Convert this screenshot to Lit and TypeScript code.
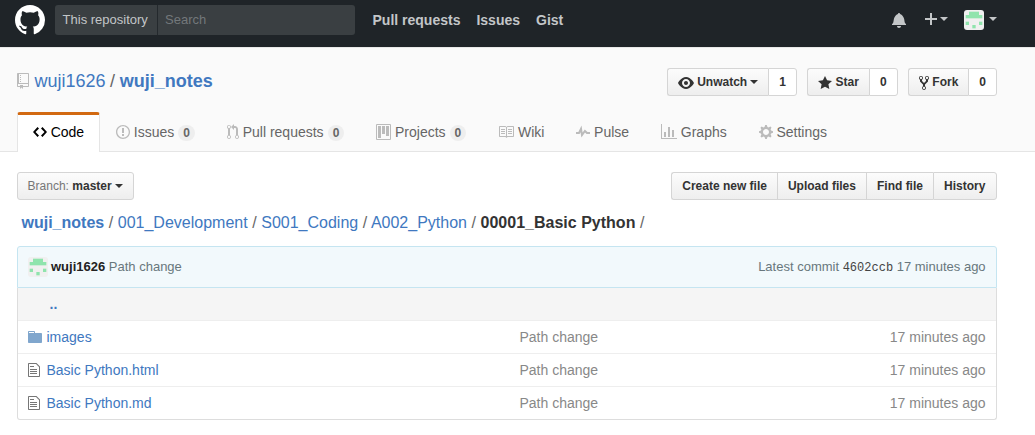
import { LitElement, html, css, svg, nothing } from "lit";
import { customElement, property } from "lit/decorators.js";

const ICONS: Record<string, [number, string]> = {
  github: [16, "M8 0C3.58 0 0 3.58 0 8c0 3.54 2.29 6.53 5.47 7.59.4.07.55-.17.55-.38 0-.19-.01-.82-.01-1.49-2.01.37-2.53-.49-2.69-.94-.09-.23-.48-.94-.82-1.13-.28-.15-.68-.52-.01-.53.63-.01 1.08.58 1.23.82.72 1.21 1.87.87 2.33.66.07-.52.28-.87.51-1.07-1.78-.2-3.64-.89-3.64-3.95 0-.87.31-1.59.82-2.15-.08-.2-.36-1.02.08-2.12 0 0 .67-.21 2.2.82.64-.18 1.32-.27 2-.27.68 0 1.36.09 2 .27 1.53-1.04 2.2-.82 2.2-.82.44 1.1.16 1.92.08 2.12.51.56.82 1.27.82 2.15 0 3.07-1.87 3.75-3.65 3.95.29.25.54.73.54 1.48 0 1.07-.01 1.93-.01 2.2 0 .21.15.46.55.38A8.013 8.013 0 0 0 16 8c0-4.42-3.58-8-8-8z"],
  repo: [12, "M4 9H3V8h1v1zm0-3H3v1h1V6zm0-2H3v1h1V4zm0-2H3v1h1V2zm8-1v12c0 .55-.45 1-1 1H6v2l-1.5-1.5L3 16v-2H1c-.55 0-1-.45-1-1V1c0-.55.45-1 1-1h10c.55 0 1 .45 1 1zm-1 10H1v2h2v-1h3v1h5v-2zm0-10H2v9h9V1z"],
  bell: [14, "M14 12v1H0v-1l.73-.58c.77-.77.81-2.55 1.19-4.42C2.69 3.23 6 2 6 2c0-.55.45-1 1-1s1 .45 1 1c0 0 3.39 1.23 4.16 5 .38 1.88.42 3.66 1.19 4.42l.66.58H14zm-7 4c1.11 0 2-.89 2-2H5c0 1.11.89 2 2 2z"],
  plus: [12, "M12 9H7v5H5V9H0V7h5V2h2v5h5z"],
  eye: [16, "M8.06 2C3 2 0 8 0 8s3 6 8.06 6C13 14 16 8 16 8s-3-6-7.94-6zM8 12c-2.2 0-4-1.78-4-4 0-2.2 1.8-4 4-4 2.22 0 4 1.8 4 4 0 2.22-1.78 4-4 4zm2-4c0 1.11-.89 2-2 2-1.11 0-2-.89-2-2 0-1.11.89-2 2-2 1.11 0 2 .89 2 2z"],
  star: [14, "M14 6l-4.9-.64L7 1 4.9 5.36 0 6l3.6 3.26L2.67 14 7 11.67 11.33 14l-.93-4.74z"],
  fork: [10, "M8 1a1.993 1.993 0 0 0-1 3.72V6L5 8 3 6V4.72A1.993 1.993 0 0 0 2 1a1.993 1.993 0 0 0-1 3.72V6.5l3 3v1.78A1.993 1.993 0 0 0 5 15a1.993 1.993 0 0 0 1-3.72V9.5l3-3V4.72A1.993 1.993 0 0 0 8 1zM2 4.2C1.34 4.2.8 3.65.8 3c0-.65.55-1.2 1.2-1.2.65 0 1.2.55 1.2 1.2 0 .65-.55 1.2-1.2 1.2zm3 10c-.66 0-1.2-.55-1.2-1.2 0-.65.55-1.2 1.2-1.2.65 0 1.2.55 1.2 1.2 0 .65-.55 1.2-1.2 1.2zm3-10c-.66 0-1.2-.55-1.2-1.2 0-.65.55-1.2 1.2-1.2.65 0 1.2.55 1.2 1.2 0 .65-.55 1.2-1.2 1.2z"],
  code: [14, "M9.5 3L8 4.5 11.5 8 8 11.5 9.5 13 14 8 9.5 3zm-5 0L0 8l4.5 5L6 11.5 2.5 8 6 4.5 4.5 3z"],
  issue: [14, "M7 2.3c3.14 0 5.7 2.56 5.7 5.7s-2.56 5.7-5.7 5.7A5.71 5.71 0 0 1 1.3 8c0-3.14 2.56-5.7 5.7-5.7zM7 1C3.14 1 0 4.14 0 8s3.14 7 7 7 7-3.14 7-7-3.14-7-7-7zm1 3H6v5h2V4zm0 6H6v2h2v-2z"],
  pull: [12, "M11 11.28V5c-.03-.78-.34-1.47-.94-2.06C9.46 2.35 8.78 2.03 8 2H7V0L4 3l3 3V4h1c.27.02.48.11.69.31.21.2.3.42.31.69v6.28A1.993 1.993 0 0 0 10 15a1.993 1.993 0 0 0 1-3.72zm-1 2.92c-.66 0-1.2-.55-1.2-1.2 0-.65.55-1.2 1.2-1.2.65 0 1.2.55 1.2 1.2 0 .65-.55 1.2-1.2 1.2zM4 3c0-1.11-.89-2-2-2a1.993 1.993 0 0 0-1 3.72v6.56A1.993 1.993 0 0 0 2 15a1.993 1.993 0 0 0 1-3.72V4.72c.59-.34 1-.98 1-1.72zm-.8 10c0 .66-.55 1.2-1.2 1.2-.65 0-1.2-.55-1.2-1.2 0-.65.55-1.2 1.2-1.2.65 0 1.2.55 1.2 1.2zM2 4.2C1.34 4.2.8 3.65.8 3c0-.65.55-1.2 1.2-1.2.65 0 1.2.55 1.2 1.2 0 .65-.55 1.2-1.2 1.2z"],
  project: [15, "M10 12h3V2h-3v10zm-4-2h3V2H6v8zm-4 4h3V2H2v12zm-1 1h13V1H1v14zM14 0H1a1 1 0 0 0-1 1v14a1 1 0 0 0 1 1h13a1 1 0 0 0 1-1V1a1 1 0 0 0-1-1z"],
  book: [16, "M3 5h4v1H3V5zm0 3h4V7H3v1zm0 2h4V9H3v1zm11-5h-4v1h4V5zm0 2h-4v1h4V7zm0 2h-4v1h4V9zm2-6v9c0 .55-.45 1-1 1H9.5l-1 1-1-1H2c-.55 0-1-.45-1-1V3c0-.55.45-1 1-1h5.5l1 1 1-1H15c.55 0 1 .45 1 1zm-8 .5L7.5 3H2v9h6V3.5zm7-.5H9.5l-.5.5V12h6V3z"],
  pulse: [14, "M11.5 8L8.8 5.4 6.6 8.5 5.5 1.6 2.38 8H0v2h3.6l.9-1.8.9 5.4L9 8.5l1.6 1.5H14V8z"],
  graph: [16, "M16 14v1H0V0h1v14h15zM5 13H3V8h2v5zm4 0H7V3h2v10zm4 0h-2V6h2v7z"],
  gear: [14, "M14 8.77v-1.6l-1.94-.64-.45-1.09.88-1.84-1.13-1.13-1.81.91-1.09-.45-.69-1.92h-1.6l-.63 1.94-1.11.45-1.84-.88-1.13 1.13.91 1.81-.45 1.09L0 7.23v1.59l1.94.64.45 1.09-.88 1.84 1.13 1.13 1.81-.91 1.09.45.69 1.92h1.59l.63-1.94 1.11-.45 1.84.88 1.13-1.13-.92-1.81.47-1.09L14 8.75v.02zM7 11c-1.66 0-3-1.34-3-3s1.34-3 3-3 3 1.34 3 3-1.34 3-3 3z"],
  folder: [14, "M13 4H7V3c0-.66-.31-1-1-1H1c-.55 0-1 .45-1 1v10c0 .55.45 1 1 1h12c.55 0 1-.45 1-1V5c0-.55-.45-1-1-1zM6 4H1V3h5v1z"],
  file: [12, "M6 5H2V4h4v1zM2 8h7V7H2v1zm0 2h7V9H2v1zm0 2h7v-1H2v1zm10-7.5V14c0 .55-.45 1-1 1H1c-.55 0-1-.45-1-1V2c0-.55.45-1 1-1h7.5L12 4.5zM11 5L8 2H1v12h10V5z"],
};

@customElement("oct-icon")
class OctIcon extends LitElement {
  @property() name = "";
  @property({ type: Number }) size = 16;
  static styles = css`
    :host { display: block; flex: none; }
    svg { display: block; fill: currentColor; }
  `;
  render() {
    const [w, d] = ICONS[this.name];
    return html`<svg width=${(w * this.size) / 16} height=${this.size} viewBox="0 0 ${w} 16"><path fill-rule="evenodd" d=${d}></path></svg>`;
  }
}

@customElement("user-avatar")
class UserAvatar extends LitElement {
  static styles = css`
    :host { display: block; flex: none; width: 20px; height: 20px; border-radius: 3px; overflow: hidden; }
    svg { display: block; }
  `;
  render() {
    const cells = [[1, 0, 3], [0, 1, 5], [0, 3, 1], [4, 3, 1], [2, 4, 1]];
    return html`<svg width="20" height="20" viewBox="0 0 12 12">
      <rect width="12" height="12" fill="#f0f0f0"></rect>
      ${cells.map(([x, y, w]) => svg`<rect x=${1 + x * 2} y=${1 + y * 2} width=${w * 2} height="2" fill="#8fe4ad"></rect>`)}
    </svg>`;
  }
}

@customElement("app-root")
class AppRoot extends LitElement {
  static styles = css`
    :host {
      display: block;
      height: 435px;
      overflow: hidden;
      background: #fff;
      color: #333;
      font: 14px/20px "Liberation Sans", Arial, sans-serif;
    }
    * { box-sizing: border-box; }
    a { color: #4078c0; text-decoration: none; }
    .caret {
      width: 0;
      height: 0;
      border: 4px solid transparent;
      border-top-color: currentColor;
      border-bottom: 0;
    }
    .top {
      display: flex;
      height: 47px;
      padding: 5px 38px 0 15px;
      background: #1f2428;
      color: #c3c6c8;
    }
    .logo { color: #fff; }
    .search {
      display: flex;
      width: 300px;
      height: 30px;
      margin-left: 10px;
      border-radius: 3px;
      background: #3a3f42;
      font-size: 13px;
      line-height: 29px;
    }
    .scope { width: 103px; padding-left: 7.6px; border-right: 1px solid #24292d; }
    .query { padding-left: 7px; color: #73787b; }
    .links {
      display: flex;
      flex: 1;
      gap: 16px;
      margin-left: 17.5px;
      font-weight: bold;
      line-height: 30px;
    }
    .user { display: flex; height: 30px; align-items: center; }
    .user .plus { margin-left: 19px; margin-bottom: 2px; }
    .user .caret { margin-left: 3px; margin-bottom: 2px; }
    .user user-avatar { margin-left: 16px; }
    .user user-avatar + .caret { margin-left: 5px; }
    .pagehead {
      height: 105px;
      padding: 20px 38px 0 17px;
      border-top: 1px solid #e8e8e8;
      border-bottom: 1px solid #e5e5e5;
      background: #fafafa;
    }
    .titlebar { display: flex; justify-content: space-between; height: 44px; }
    .title { display: flex; height: 26px; align-items: center; color: #bbb; }
    .title span { margin-left: 5.5px; font-size: 18px; line-height: 26px; word-spacing: -0.45px; color: #666; }
    .actions { display: flex; gap: 10px; }
    .group { display: flex; height: 28px; }
    .btn {
      display: flex;
      height: 28px;
      padding: 0 10px;
      align-items: center;
      border: 1px solid #d5d5d5;
      border-radius: 3px;
      background: linear-gradient(#fcfcfc, #eee);
      font-size: 12px;
      font-weight: bold;
      line-height: 26px;
      white-space: pre;
    }
    .btn .caret { margin-left: 3px; }
    .btn oct-icon { margin-right: 3.7px; position: relative; top: 1px; }
    .group .btn:not(:last-child) { border-right: 0; border-radius: 3px 0 0 3px; }
    .group .btn:not(:first-child):not(:last-child) { border-radius: 0; }
    .group .btn:last-child { border-radius: 0 3px 3px 0; }
    .tools .group .btn:last-child { padding-right: 10.7px; }
    .group .count { background: #fff; }
    .tabs { display: flex; height: 40px; }
    .tab {
      display: flex;
      height: 40px;
      padding: 0 16px;
      align-items: center;
      color: #666;
    }
    .tab oct-icon { margin-right: 3.7px; color: #bbb; }
    .tab.on {
      padding: 0 15px 3px;
      border: 1px solid #e5e5e5;
      border-top: 3px solid #d26911;
      border-bottom: 0;
      border-radius: 3px 3px 0 0;
      background: #fff;
      color: #000;
    }
    .tab.on oct-icon { color: #000; }
    .counter {
      margin: 2px 0 0 4px;
      padding: 3px 5px 2px;
      border-radius: 20px;
      background: #eee;
      font-size: 12px;
      font-weight: bold;
      line-height: 11px;
    }
    .body { padding: 20px 38px 0 17px; }
    .tools { display: flex; justify-content: space-between; }
    .branch { padding: 0 10.4px 0 9.6px; }
    .branch span { font-weight: normal; color: #767676; }
    .crumbs { margin: 10px 0 11px 4.5px; font-size: 16px; line-height: 25px; word-spacing: 0.12px; color: #666; }
    .crumbs strong { color: #333; }
    .crumbs a strong { color: #4078c0; }
    .commit {
      display: flex;
      height: 42px;
      padding: 0 10.4px 0 10px;
      align-items: center;
      border: 1px solid #c5e5f1;
      border-radius: 3px 3px 0 0;
      background: #f2f9fc;
      font-size: 13px;
      color: #68777d;
    }
    .commit user-avatar { margin-right: 3px; }
    .commit strong { color: #222; }
    .msg { flex: 1; }
    .sha { font: 12px "Liberation Mono", monospace; color: #444; }
    .files { border: 1px solid #ddd; border-top: 0; border-radius: 0 0 3px 3px; }
    .row {
      display: grid;
      grid-template-columns: 18.5px 473px 1fr auto;
      height: 33px;
      padding: 0 10.5px 0 10px;
      align-items: center;
      border-top: 1px solid #eee;
      color: #888;
    }
    .row oct-icon { color: #767676; }
    .row oct-icon[name="folder"] { color: #80a6cd; }
    .up {
      height: 32px;
      padding-left: 31.5px;
      background: #f5f5f5;
      font-weight: bold;
      line-height: 32px;
    }
  `;

  private tab(icon: string, label: string, count?: number) {
    return html`<div class="tab ${icon === "code" ? "on" : ""}">
      <oct-icon name=${icon}></oct-icon>${label}${count === undefined ? nothing : html`<span class="counter">${count}</span>`}
    </div>`;
  }

  private action(icon: string, label: string, count: number, menu = false) {
    return html`<div class="group">
      <div class="btn"><oct-icon name=${icon}></oct-icon>${label}${menu ? html`<i class="caret"></i>` : nothing}</div>
      <div class="btn count">${count}</div>
    </div>`;
  }

  private file(icon: string, name: string) {
    return html`<div class="row">
      <oct-icon name=${icon}></oct-icon><a>${name}</a><span>Path change</span><span>17 minutes ago</span>
    </div>`;
  }

  render() {
    return html`
      <header class="top">
        <oct-icon class="logo" name="github" size="30"></oct-icon>
        <div class="search"><div class="scope">This repository</div><div class="query">Search</div></div>
        <nav class="links"><span>Pull requests</span><span>Issues</span><span>Gist</span></nav>
        <div class="user">
          <oct-icon name="bell"></oct-icon>
          <oct-icon class="plus" name="plus"></oct-icon><i class="caret"></i>
          <user-avatar></user-avatar><i class="caret"></i>
        </div>
      </header>
      <section class="pagehead">
        <div class="titlebar">
          <div class="title">
            <oct-icon name="repo"></oct-icon>
            <span><a>wuji1626</a> / <a><strong>wuji_notes</strong></a></span>
          </div>
          <div class="actions">
            ${this.action("eye", "Unwatch", 1, true)} ${this.action("star", "Star", 0)} ${this.action("fork", "Fork", 0)}
          </div>
        </div>
        <nav class="tabs">
          ${this.tab("code", "Code")} ${this.tab("issue", "Issues", 0)} ${this.tab("pull", "Pull requests", 0)}
          ${this.tab("project", "Projects", 0)} ${this.tab("book", "Wiki")} ${this.tab("pulse", "Pulse")}
          ${this.tab("graph", "Graphs")} ${this.tab("gear", "Settings")}
        </nav>
      </section>
      <main class="body">
        <div class="tools">
          <div class="btn branch"><span>Branch: </span>master<i class="caret"></i></div>
          <div class="group">
            ${["Create new file", "Upload files", "Find file", "History"].map((t) => html`<div class="btn">${t}</div>`)}
          </div>
        </div>
        <div class="crumbs">
          <a><strong>wuji_notes</strong></a> / <a>001_Development</a> / <a>S001_Coding</a> / <a>A002_Python</a> /
          <strong>00001_Basic Python</strong> /
        </div>
        <div class="commit">
          <user-avatar></user-avatar>
          <div class="msg"><strong>wuji1626</strong> Path change</div>
          <div>Latest commit <span class="sha">4602ccb</span> 17 minutes ago</div>
        </div>
        <div class="files">
          <div class="up"><a>..</a></div>
          ${this.file("folder", "images")} ${this.file("file", "Basic Python.html")} ${this.file("file", "Basic Python.md")}
        </div>
      </main>
    `;
  }
}
